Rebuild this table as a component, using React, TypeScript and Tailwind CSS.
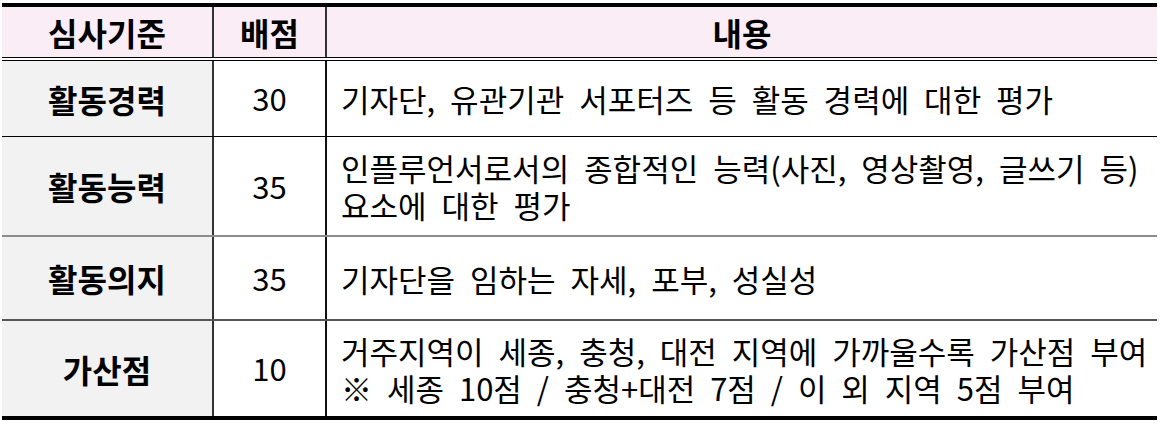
const font = { fontFamily: '"Noto Sans CJK KR", "Noto Sans", sans-serif' };

const rows = [
  {
    label: "활동경력",
    score: "30",
    lines: ["기자단, 유관기관 서포터즈 등 활동 경력에 대한 평가"],
    h: "h-[76px]",
    border: "border-b border-black",
  },
  {
    label: "활동능력",
    score: "35",
    lines: ["인플루언서로서의 종합적인 능력(사진, 영상촬영, 글쓰기 등)", "요소에 대한 평가"],
    h: "h-[100px]",
    border: "border-b-2 border-[#8c8c8c]",
  },
  {
    label: "활동의지",
    score: "35",
    lines: ["기자단을 임하는 자세, 포부, 성실성"],
    h: "h-[84px]",
    border: "border-b-2 border-[#555555]",
  },
  {
    label: "가산점",
    score: "10",
    lines: ["거주지역이 세종, 충청, 대전 지역에 가까울수록 가산점 부여", "※ 세종 10점 / 충청+대전 7점 / 이 외 지역 5점 부여"],
    h: "h-[95px]",
    border: "",
  },
];

export default function App() {
  return (
    <div className="w-[1160px] h-[424px] bg-white pt-[3px] pl-[2px] text-black" style={font}>
      <div className="w-[1155px] border-t-4 border-b-4 border-black">
        {/* header */}
        <div className="flex h-[50px] bg-[#fbedf5] text-[32px] font-bold">
          <div className="w-[212px] flex items-center justify-center border-r-2 border-[#333]">심사기준</div>
          <div className="w-[113px] flex items-center justify-center border-r-2 border-[#333]">배점</div>
          <div className="flex-1 flex items-center justify-center">내용</div>
        </div>
        <div className="h-[4px] border-t border-b border-black bg-white" />
        {rows.map((r) => (
          <div key={r.label} className={`flex ${r.h} ${r.border}`}>
            <div className="w-[212px] bg-[#f2f2f2] flex items-center justify-center text-[32px] font-bold border-r-2 border-[#333]">
              {r.label}
            </div>
            <div className="w-[113px] flex items-center justify-center text-[31px] border-r-2 border-[#111]">
              {r.score}
            </div>
            <div className="flex-1 flex flex-col justify-center pl-[14px] text-[31px] leading-[37px] whitespace-nowrap [word-spacing:8px]">
              {r.lines.map((l) => (
                <div key={l}>{l}</div>
              ))}
            </div>
          </div>
        ))}
      </div>
    </div>
  );
}
